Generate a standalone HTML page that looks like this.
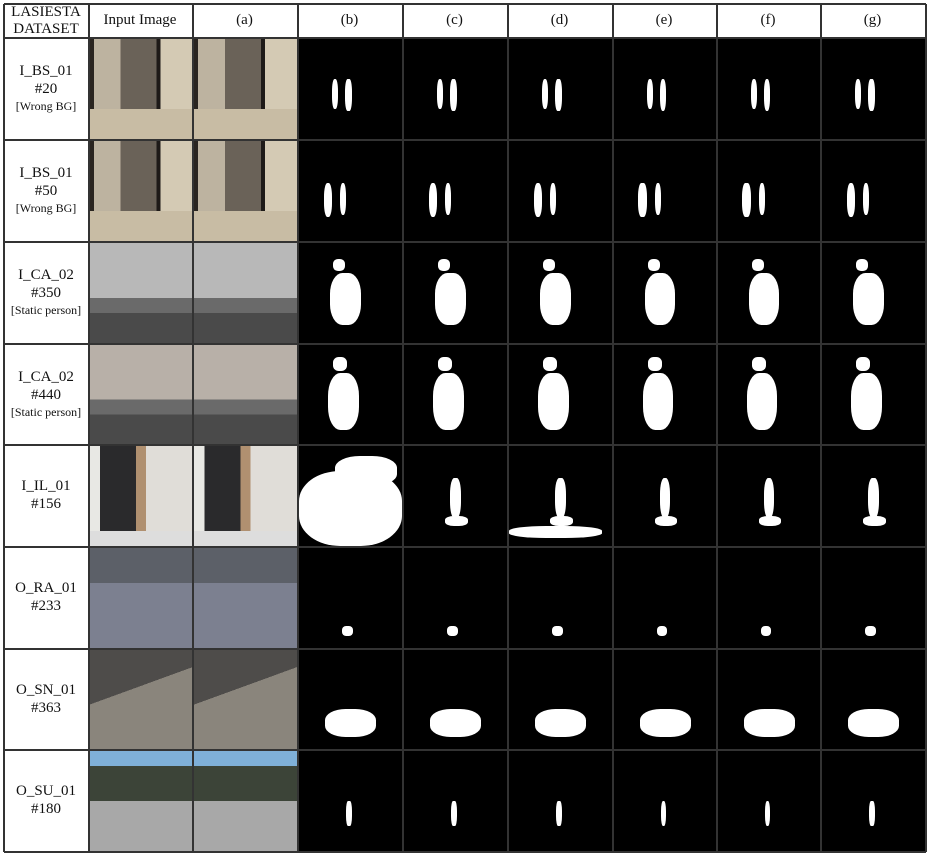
<!DOCTYPE html>
<html><head><meta charset="utf-8"><style>
body{margin:0;width:930px;height:855px;background:#fff;position:relative;overflow:hidden;font-family:"Liberation Serif",serif;color:#111}
.h{position:absolute;top:4px;height:33px;display:flex;flex-direction:column;align-items:center;justify-content:center;font-size:15px;text-align:center;line-height:17px}
.l{position:absolute;left:4px;width:84px;display:flex;flex-direction:column;align-items:center;justify-content:center;text-align:center;font-size:15px;line-height:18px}
.l div{white-space:nowrap}
.l .s{font-size:12px;line-height:16px}
.vl{position:absolute;top:4px;height:848px;width:2px;background:#333}
.hl{position:absolute;left:4px;width:922px;height:2px;background:#333}
.img{position:absolute;overflow:hidden;background:#000}
.w{position:absolute;background:#fff;border-radius:40%}
</style></head><body>
<div class="h" style="left:4px;width:84px"><div>LASIESTA</div><div>DATASET</div></div>
<div class="h" style="left:88px;width:104px">Input Image</div>
<div class="h" style="left:192px;width:105px">(a)</div>
<div class="h" style="left:297px;width:105px">(b)</div>
<div class="h" style="left:402px;width:105px">(c)</div>
<div class="h" style="left:507px;width:105px">(d)</div>
<div class="h" style="left:612px;width:104px">(e)</div>
<div class="h" style="left:716px;width:104px">(f)</div>
<div class="h" style="left:820px;width:105px">(g)</div>

<div class="l" style="top:37px;height:102px"><div>I_BS_01</div><div>#20</div><div class="s">[Wrong BG]</div></div>
<div class="l" style="top:139px;height:102px"><div>I_BS_01</div><div>#50</div><div class="s">[Wrong BG]</div></div>
<div class="l" style="top:241px;height:102px"><div>I_CA_02</div><div>#350</div><div class="s">[Static person]</div></div>
<div class="l" style="top:343px;height:101px"><div>I_CA_02</div><div>#440</div><div class="s">[Static person]</div></div>
<div class="l" style="top:444px;height:102px"><div>I_IL_01</div><div>#156</div></div>
<div class="l" style="top:546px;height:102px"><div>O_RA_01</div><div>#233</div></div>
<div class="l" style="top:648px;height:101px"><div>O_SN_01</div><div>#363</div></div>
<div class="l" style="top:749px;height:102px"><div>O_SU_01</div><div>#180</div></div>

<div id="cells"></div>
<script>
var xs=[88,192,297,402,507,612,716,820,925];
var ys=[37,139,241,343,444,546,648,749,851];
var bgs=[
"linear-gradient(90deg,#2a2520 0 4%,#bdb3a0 4% 30%,#6a6258 30% 65%,#1e1a18 65% 69%,#d4cab4 69%)",
"linear-gradient(90deg,#2a2520 0 4%,#bdb3a0 4% 30%,#6a6258 30% 65%,#1e1a18 65% 69%,#d4cab4 69%)",
"linear-gradient(180deg,#b8b8b8 0 55%,#6a6a6a 55% 70%,#4a4a4a 70%)",
"linear-gradient(180deg,#b8b0a8 0 55%,#6a6a6a 55% 70%,#4a4a4a 70%)",
"linear-gradient(90deg,#e8e8e4 0 10%,#2a2a2c 10% 45%,#b09070 45% 55%,#e0ddd8 55%)",
"linear-gradient(180deg,#5c6068 0 35%,#7c8090 35%)",
"linear-gradient(160deg,#4e4c4a 0 40%,#8a857c 40%)",
"linear-gradient(180deg,#7fb0d8 0 15%,#3c4438 15% 50%,#a8a8a8 50%)"];
var fl=["linear-gradient(180deg,transparent 70%,#c8bca4 70%)","linear-gradient(180deg,transparent 70%,#c8bca4 70%)","","","linear-gradient(180deg,transparent 85%,#ddd 85%)","","",""];
var B=[
[[32,40,6,30],[45,40,6,32]],
[[24,42,8,34],[40,42,6,32]],
[[30,30,30,52],[33,16,12,12]],
[[28,28,30,58],[33,12,14,14]],
[[45,32,10,40],[40,70,22,10]],
[[42,78,10,10]],
[[25,60,50,28]],
[[46,50,5,25]]];
var h="";
for(var r=0;r<8;r++){
 for(var c=0;c<8;c++){
  var x=xs[c]+2,y=ys[r]+2,w=xs[c+1]-xs[c]-2,hh=ys[r+1]-ys[r]-2;
  if(c<2){h+='<div class="img" style="left:'+x+'px;top:'+y+'px;width:'+w+'px;height:'+hh+'px;background:'+(fl[r]?fl[r]+',':'')+bgs[r]+'"></div>';}
  else{
   h+='<div class="img" style="left:'+x+'px;top:'+y+'px;width:'+w+'px;height:'+hh+'px">';
   var bl=B[r];
   if(r==4&&c==2){bl=[[0,25,100,75],[35,10,60,30]];}
   if(r==4&&c==4){bl=bl.concat([[0,80,90,12]]);}
   for(var k=0;k<bl.length;k++){var b=bl[k];h+='<div class="w" style="left:'+b[0]+'%;top:'+b[1]+'%;width:'+b[2]+'%;height:'+b[3]+'%"></div>';}
   h+='</div>';
  }
 }
}
for(var i=0;i<xs.length;i++)h+='<div class="vl" style="left:'+(xs[i])+'px"></div>';
h+='<div class="vl" style="left:3px"></div>';
for(var j=0;j<ys.length;j++)h+='<div class="hl" style="top:'+ys[j]+'px"></div>';
h+='<div class="hl" style="top:3px"></div>';
document.getElementById("cells").innerHTML=h;
</script>
</body></html>
